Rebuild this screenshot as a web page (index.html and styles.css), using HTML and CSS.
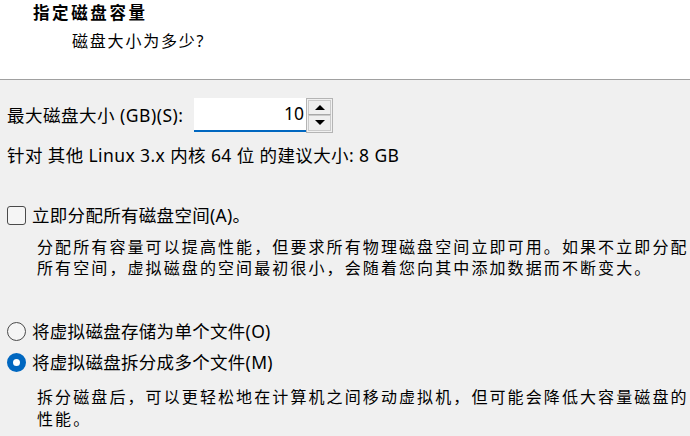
FILE: index.html
```html
<!DOCTYPE html>
<html lang="zh-CN">
<head>
<meta charset="utf-8">
<title>指定磁盘容量</title>
<link rel="stylesheet" href="styles.css">
</head>
<body>
<header class="head">
  <div class="title">指定磁盘容量</div>
  <div class="subtitle">磁盘大小为多少?</div>
</header>
<main class="page">
  <div class="size-row">
    <label class="size-label">最大磁盘大小 (GB)(S):</label>
    <div class="spin">
      <div class="spin-input">10</div>
      <div class="spin-btns">
        <div class="spin-btn up"><span class="tri-up"></span></div>
        <div class="spin-btn down"><span class="tri-down"></span></div>
      </div>
    </div>
  </div>
  <div class="hint">针对 其他 Linux 3.x 内核 64 位 的建议大小: 8 GB</div>
  <div class="option opt-check"><span class="checkbox"></span><span>立即分配所有磁盘空间(A)。</span></div>
  <p class="desc desc-1">分配所有容量可以提高性能，但要求所有物理磁盘空间立即可用。如果不立即分配所有空间，虚拟磁盘的空间最初很小，会随着您向其中添加数据而不断变大。</p>
  <div class="option opt-radio1"><span class="radio"></span><span>将虚拟磁盘存储为单个文件(O)</span></div>
  <div class="option opt-radio2"><span class="radio checked"></span><span>将虚拟磁盘拆分成多个文件(M)</span></div>
  <p class="desc desc-2">拆分磁盘后，可以更轻松地在计算机之间移动虚拟机，但可能会降低大容量磁盘的性能。</p>
</main>
</body>
</html>
```
FILE: styles.css
```css
html, body {
  margin: 0;
  padding: 0;
}
body {
  width: 690px;
  height: 436px;
  overflow: hidden;
  background: #f0f0f0;
  color: #000;
  font-family: "Noto Sans", "Noto Sans CJK SC", sans-serif;
  font-size: 16px;
}
.head {
  box-sizing: border-box;
  height: 80px;
  background: #fff;
  border-bottom: 1px solid #a0a0a0;
  padding-top: 1px;
}
.title {
  padding-left: 33px;
  font-weight: bold;
  font-size: 16.5px;
  letter-spacing: 2.6px;
  line-height: 24px;
}
.subtitle {
  padding-left: 72px;
  margin-top: 4px;
  font-size: 16px;
  letter-spacing: 1.8px;
  line-height: 24px;
}
.page {
  padding-left: 7px;
}
.size-row {
  display: flex;
  align-items: center;
  margin-top: 17px;
  height: 36px;
}
.size-label {
  width: 187px;
  flex-shrink: 0;
  white-space: nowrap;
  font-size: 17.5px;
  letter-spacing: 0.5px;
  line-height: 24px;
}
.spin {
  display: flex;
  align-items: center;
}
.spin-input {
  box-sizing: border-box;
  width: 112px;
  height: 34px;
  background: #fff;
  border-bottom: 2px solid #0067c0;
  text-align: right;
  padding-right: 2px;
  font-size: 17.5px;
  line-height: 30px;
}
.spin-btns {
  box-sizing: border-box;
  width: 27px;
  height: 35px;
  border: 1px solid #b4b4b4;
  padding: 1px;
  display: flex;
  flex-direction: column;
}
.spin-btn {
  flex: 1;
  border: 1px solid #cacaca;
  background: #efefef;
  display: flex;
  align-items: center;
  justify-content: center;
}
.spin-btn.up {
  border-bottom-color: #a8a8a8;
}
.tri-up {
  width: 0;
  height: 0;
  border-left: 5px solid transparent;
  border-right: 5px solid transparent;
  border-bottom: 5px solid #000;
}
.tri-down {
  width: 0;
  height: 0;
  border-left: 5px solid transparent;
  border-right: 5px solid transparent;
  border-top: 5px solid #000;
}
.hint {
  margin-top: 10px;
  font-size: 17.5px;
  letter-spacing: 0.4px;
  line-height: 24px;
}
.option {
  display: flex;
  align-items: center;
  gap: 6px;
  font-size: 17.5px;
  letter-spacing: 0.3px;
  line-height: 24px;
}
.opt-check {
  margin-top: 36px;
}
.opt-radio1 {
  margin-top: 40px;
}
.opt-radio2 {
  margin-top: 7px;
}
.checkbox {
  box-sizing: border-box;
  width: 19px;
  height: 19px;
  border: 1px solid #4a4a4a;
  border-radius: 3px;
  background: #f5f5f5;
  flex-shrink: 0;
}
.radio {
  box-sizing: border-box;
  width: 19px;
  height: 19px;
  border: 1px solid #4a4a4a;
  border-radius: 50%;
  background: #f5f5f5;
  flex-shrink: 0;
}
.radio.checked {
  border: 6px solid #0067c0;
  background: #fff;
}
.desc {
  margin: 0;
  padding-left: 30px;
  padding-right: 0;
  font-size: 16px;
  letter-spacing: 2.1px;
  line-height: 21px;
}
.desc-1 {
  margin-top: 10px;
}
.desc-2 {
  margin-top: 12px;
  line-height: 22px;
}
```
